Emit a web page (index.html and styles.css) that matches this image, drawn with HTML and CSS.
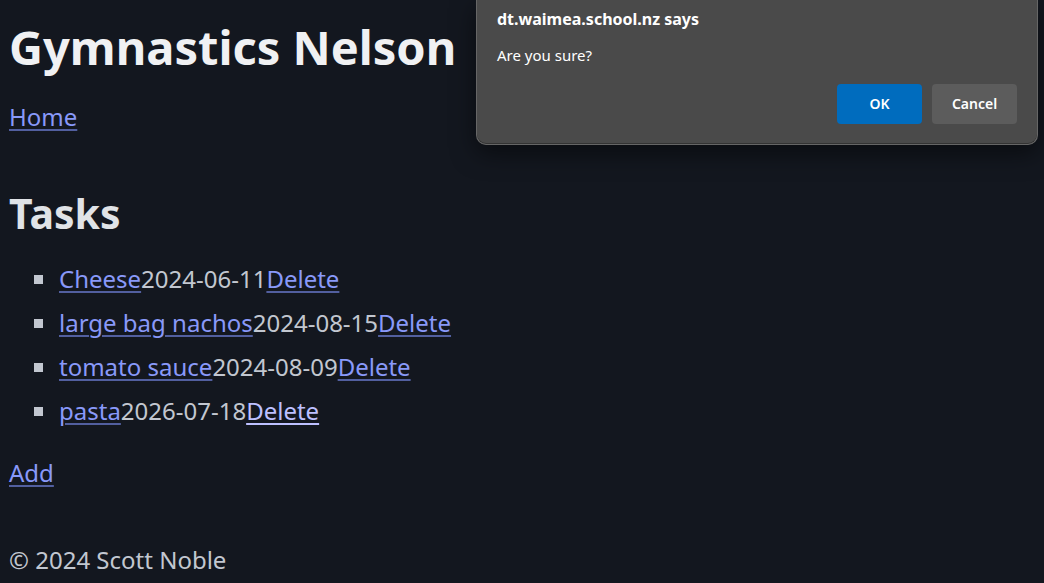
FILE: index.html
```html
<!DOCTYPE html>
<html lang="en">
<head>
<meta charset="utf-8">
<title>Gymnastics Nelson</title>
<link rel="stylesheet" href="styles.css">
</head>
<body>
<header class="site-header">
<h1 class="site-title">Gymnastics Nelson</h1>
<nav><a class="link" href="#home">Home</a></nav>
</header>
<main>
<h2 class="section-title">Tasks</h2>
<ul class="tasks">
<li class="task"><a class="link" href="#cheese">Cheese</a><span>2024-06-11</span><a class="link" href="#delete-1">Delete</a></li>
<li class="task"><a class="link" href="#nachos">large bag nachos</a><span>2024-08-15</span><a class="link" href="#delete-2">Delete</a></li>
<li class="task"><a class="link" href="#sauce">tomato sauce</a><span>2024-08-09</span><a class="link" href="#delete-3">Delete</a></li>
<li class="task"><a class="link" href="#pasta">pasta</a><span>2026-07-18</span><a class="link link-active" href="#delete-4">Delete</a></li>
</ul>
<a class="link" href="#add">Add</a>
</main>
<footer class="site-footer">© 2024 Scott Noble</footer>
<div class="dialog" role="alertdialog" aria-labelledby="dialog-title" aria-describedby="dialog-text">
<h2 class="dialog-title" id="dialog-title">dt.waimea.school.nz says</h2>
<p class="dialog-text" id="dialog-text">Are you sure?</p>
<div class="dialog-actions">
<button class="button button-primary" type="button">OK</button>
<button class="button" type="button">Cancel</button>
</div>
</div>
</body>
</html>
```

FILE: styles.css
```css
* { box-sizing: border-box; }
body {
  margin: 0;
  padding: 16px 9px 0;
  background: #13171f;
  color: #c2c7d0;
  font: 24px/38px "Noto Sans", "Open Sans", sans-serif;
}
.site-title {
  margin: 0 0 20px;
  color: #f0f1f3;
  font-size: 47px;
  line-height: 62px;
  font-weight: 700;
}
.link {
  color: #8999f9;
  text-decoration: underline;
  text-decoration-color: #525f9f;
  text-decoration-thickness: 2px;
  text-underline-offset: 3px;
}
.link-active {
  color: #bdc0ff;
  text-decoration-color: #bdc0ff;
}
.section-title {
  margin: 50px 0 20px;
  color: #e0e3e7;
  font-size: 41px;
  line-height: 54px;
  font-weight: 700;
}
.tasks {
  margin: 0 0 24px;
  padding: 0 0 0 25px;
  list-style: none;
}
.task {
  display: flex;
  align-items: center;
  margin-bottom: 6px;
}
.task::before {
  content: "";
  width: 9px;
  height: 9px;
  margin-right: 16px;
  background: #c2c7d0;
}
.site-footer { margin-top: 49px; }
.dialog {
  position: absolute;
  top: 0;
  right: 6px;
  width: 562px;
  padding: 7px 20px 20px;
  border: 1px solid #666;
  border-top: 0;
  border-radius: 0 0 10px 10px;
  background: #4a4a4a;
  color: #fff;
  font-size: 15px;
  line-height: 24px;
  box-shadow: inset 0 -1px #333, 0 8px 24px rgba(0, 0, 0, 0.5);
}
.dialog-title {
  margin: 0 0 12px;
  font-size: 16px;
  line-height: 24px;
  font-weight: 700;
}
.dialog-text { margin: 0 0 17px; }
.dialog-actions {
  display: flex;
  justify-content: flex-end;
  gap: 10px;
}
.button {
  width: 85px;
  height: 40px;
  padding: 0;
  border: 0;
  border-radius: 4px;
  background: #5c5c5c;
  color: #fff;
  font: 600 14px/20px "Noto Sans", "Open Sans", sans-serif;
}
.button-primary { background: #006cbe; }
```
